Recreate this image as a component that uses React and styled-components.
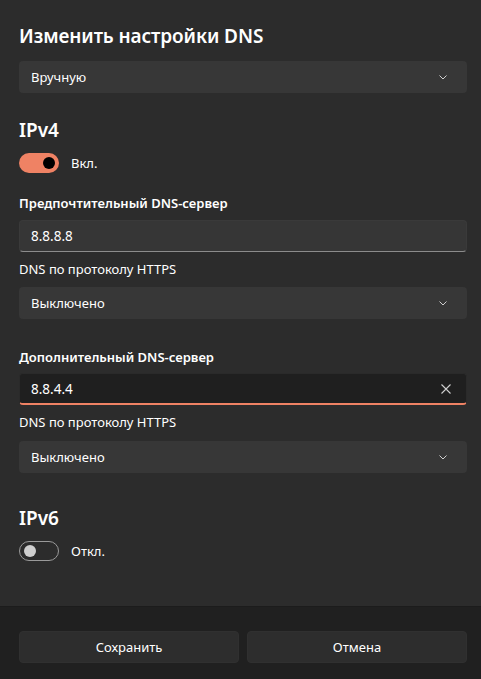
import React from 'react';
import styled, { createGlobalStyle } from 'styled-components';

const GlobalStyle = createGlobalStyle`
  html, body {
    margin: 0;
    padding: 0;
    background: #2c2c2c;
  }
  body {
    font-family: 'Noto Sans', 'Open Sans', sans-serif;
    color: #ffffff;
  }
`;

const Dialog = styled.div`
  width: 481px;
  height: 679px;
  display: flex;
  flex-direction: column;
  background: #2c2c2c;
`;

const Body = styled.div`
  flex: 1;
  padding: 22px 14px 0 19px;
  display: flex;
  flex-direction: column;
`;

const Title = styled.h1`
  margin: 0 0 11px;
  font-size: 19px;
  font-weight: 600;
  line-height: 28px;
  letter-spacing: -0.1px;
`;

const Heading = styled.h2`
  margin: ${p => p.$top}px 0 9px;
  font-size: 19px;
  font-weight: 600;
  line-height: 28px;
`;

const Label = styled.div`
  font-size: 13px;
  font-weight: ${p => (p.$bold ? 600 : 400)};
  line-height: 20px;
  margin: ${p => p.$top}px 0 ${p => p.$bottom}px;
  color: #ffffff;
`;

const Select = styled.div`
  height: 32px;
  display: flex;
  align-items: center;
  justify-content: space-between;
  padding: 0 18px 0 12px;
  background: #373737;
  border-radius: 4px;
  font-size: 13px;
  box-sizing: border-box;
`;

const Input = styled.div`
  height: 32px;
  display: flex;
  align-items: center;
  justify-content: space-between;
  padding: 0 14px 0 11px;
  box-sizing: border-box;
  border-radius: 4px;
  font-size: 13.5px;
  background: ${p => (p.$focused ? '#1f1f1f' : '#363636')};
  border: 1px solid ${p => (p.$focused ? '#2a2a2a' : '#3a3a3a')};
  border-bottom: ${p => (p.$focused ? '2px solid #ef8264' : '1px solid #8c8c8c')};
`;

const ToggleRow = styled.div`
  display: flex;
  align-items: center;
  gap: 12px;
  font-size: 13px;
`;

const Track = styled.div`
  width: 40px;
  height: 20px;
  box-sizing: border-box;
  border-radius: 10px;
  display: flex;
  align-items: center;
  padding: 0 4px;
  justify-content: ${p => (p.$on ? 'flex-end' : 'flex-start')};
  background: ${p => (p.$on ? '#ef8264' : 'transparent')};
  border: ${p => (p.$on ? 'none' : '1px solid #9a9a9a')};
`;

const Thumb = styled.div`
  width: 12px;
  height: 12px;
  border-radius: 50%;
  background: ${p => (p.$on ? '#000000' : '#cfcfcf')};
`;

const Footer = styled.div`
  height: 73px;
  background: #202020;
  border-top: 1px solid #1c1c1c;
  display: grid;
  grid-template-columns: 1fr 1fr;
  gap: 8px;
  padding: 24px 14px 0 19px;
  box-sizing: border-box;
`;

const Button = styled.button`
  height: 32px;
  border: 1px solid #303030;
  border-radius: 4px;
  background: #2d2d2d;
  color: #ffffff;
  font-family: inherit;
  font-size: 13px;
`;

const Chevron = () => (
  <svg width="12" height="12" viewBox="0 0 12 12" fill="none">
    <path d="M2.5 4.5 L6 8 L9.5 4.5" stroke="#cfcfcf" strokeWidth="1" />
  </svg>
);

const Clear = () => (
  <svg width="12" height="12" viewBox="0 0 12 12" fill="none">
    <path d="M1.5 1.5 L10.5 10.5 M10.5 1.5 L1.5 10.5" stroke="#d0d0d0" strokeWidth="1.1" />
  </svg>
);

function Toggle({ on, label }) {
  return (
    <ToggleRow>
      <Track $on={on}>
        <Thumb $on={on} />
      </Track>
      {label}
    </ToggleRow>
  );
}

export default function App() {
  return (
    <>
      <GlobalStyle />
      <Dialog>
        <Body>
          <Title>Изменить настройки DNS</Title>
          <Select>
            Вручную
            <Chevron />
          </Select>

          <Heading $top={23}>IPv4</Heading>
          <Toggle on label="Вкл." />

          <Label $bold $top={20} $bottom={7}>Предпочтительный DNS-сервер</Label>
          <Input>8.8.8.8</Input>
          <Label $top={7} $bottom={8}>DNS по протоколу HTTPS</Label>
          <Select>
            Выключено
            <Chevron />
          </Select>

          <Label $bold $top={28} $bottom={6}>Дополнительный DNS-сервер</Label>
          <Input $focused>
            8.8.4.4
            <Clear />
          </Input>
          <Label $top={7} $bottom={9}>DNS по протоколу HTTPS</Label>
          <Select>
            Выключено
            <Chevron />
          </Select>

          <Heading $top={31}>IPv6</Heading>
          <Toggle label="Откл." />
        </Body>
        <Footer>
          <Button>Сохранить</Button>
          <Button>Отмена</Button>
        </Footer>
      </Dialog>
    </>
  );
}
